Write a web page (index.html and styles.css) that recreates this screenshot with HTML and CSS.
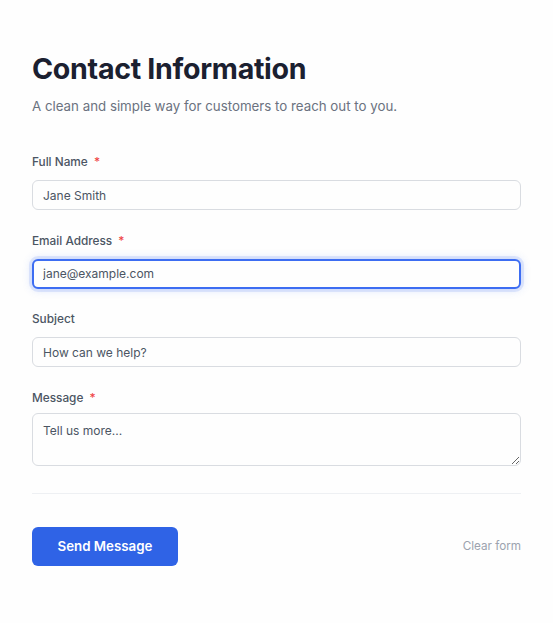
FILE: index.html
```html
<!DOCTYPE html>
<html lang="en">
<head>
    <meta charset="UTF-8">
    <meta name="viewport" content="width=device-width, initial-scale=1.0">
    <title>Contact Information</title>
    <link rel="stylesheet" href="styles.css">
</head>
<body>
    <div class="card">
        <h1>Contact Information</h1>
        <p class="subtitle">A clean and simple way for customers to reach out to you.</p>

        <form class="contact-form">
            <div class="field">
                <label for="name">Full Name <span class="required">*</span></label>
                <input type="text" id="name" value="Jane Smith">
            </div>

            <div class="field">
                <label for="email">Email Address <span class="required">*</span></label>
                <input type="email" id="email" class="is-focused" value="jane@example.com">
            </div>

            <div class="field">
                <label for="subject">Subject</label>
                <input type="text" id="subject" placeholder="How can we help?">
            </div>

            <div class="field field-message">
                <label for="message">Message <span class="required">*</span></label>
                <textarea id="message" placeholder="Tell us more..."></textarea>
            </div>

            <div class="actions">
                <button type="button" class="send-button">Send Message</button>
                <a href="#" class="clear-link">Clear form</a>
            </div>
        </form>
    </div>
</body>
</html>
```

FILE: styles.css
```css
* {
    margin: 0;
    padding: 0;
    box-sizing: border-box;
}

body {
    font-family: Inter, 'Noto Sans', sans-serif;
    background: #fdfdfe;
    color: #1b2030;
}

.card {
    min-height: 100vh;
    padding: 51px 32px 40px;
    background: #fefefe;
}

h1 {
    font-size: 28.6px;
    line-height: 36px;
    font-weight: 700;
    letter-spacing: -0.3px;
    color: #1b2030;
}

.subtitle {
    margin-top: 8px;
    font-size: 13.3px;
    line-height: 22px;
    color: #6b7280;
}

.contact-form {
    margin-top: 35px;
}

.field {
    display: flex;
    flex-direction: column;
    margin-bottom: 20.6px;
}

.field label {
    font-size: 11.8px;
    line-height: 20px;
    font-weight: 500;
    color: #4b5563;
    margin-bottom: 8px;
}

.required {
    color: #ef4444;
    margin-left: 3px;
}

.field input,
.field textarea {
    width: 100%;
    font-family: inherit;
    font-size: 12px;
    color: #4b5563;
    background: #fefefe;
    border: 1px solid #d9dce1;
    border-radius: 6px;
    padding: 0 10px;
    outline: none;
}

.field input {
    height: 30px;
}

.field input::placeholder,
.field textarea::placeholder {
    color: #4b5563;
}

.field input.is-focused {
    border: 2px solid #3d6df2;
    padding: 0 9px;
    box-shadow: 0 0 0 3px rgba(61, 109, 242, 0.12), 0 0 10px rgba(61, 109, 242, 0.25);
}

.field-message label {
    margin-bottom: 5px;
}

.field textarea {
    height: 53px;
    padding: 8px 10px;
    line-height: 18px;
    resize: vertical;
}

.actions {
    display: flex;
    align-items: center;
    justify-content: space-between;
    margin-top: 27px;
    padding-top: 33px;
    border-top: 1px solid #eef0f3;
}

.send-button {
    width: 146px;
    height: 39px;
    border: none;
    border-radius: 6px;
    background: #2f63e6;
    color: #fff;
    font-family: inherit;
    font-size: 13.3px;
    font-weight: 600;
    cursor: pointer;
}

.clear-link {
    font-size: 11.7px;
    color: #9ca3af;
    text-decoration: none;
}
```
